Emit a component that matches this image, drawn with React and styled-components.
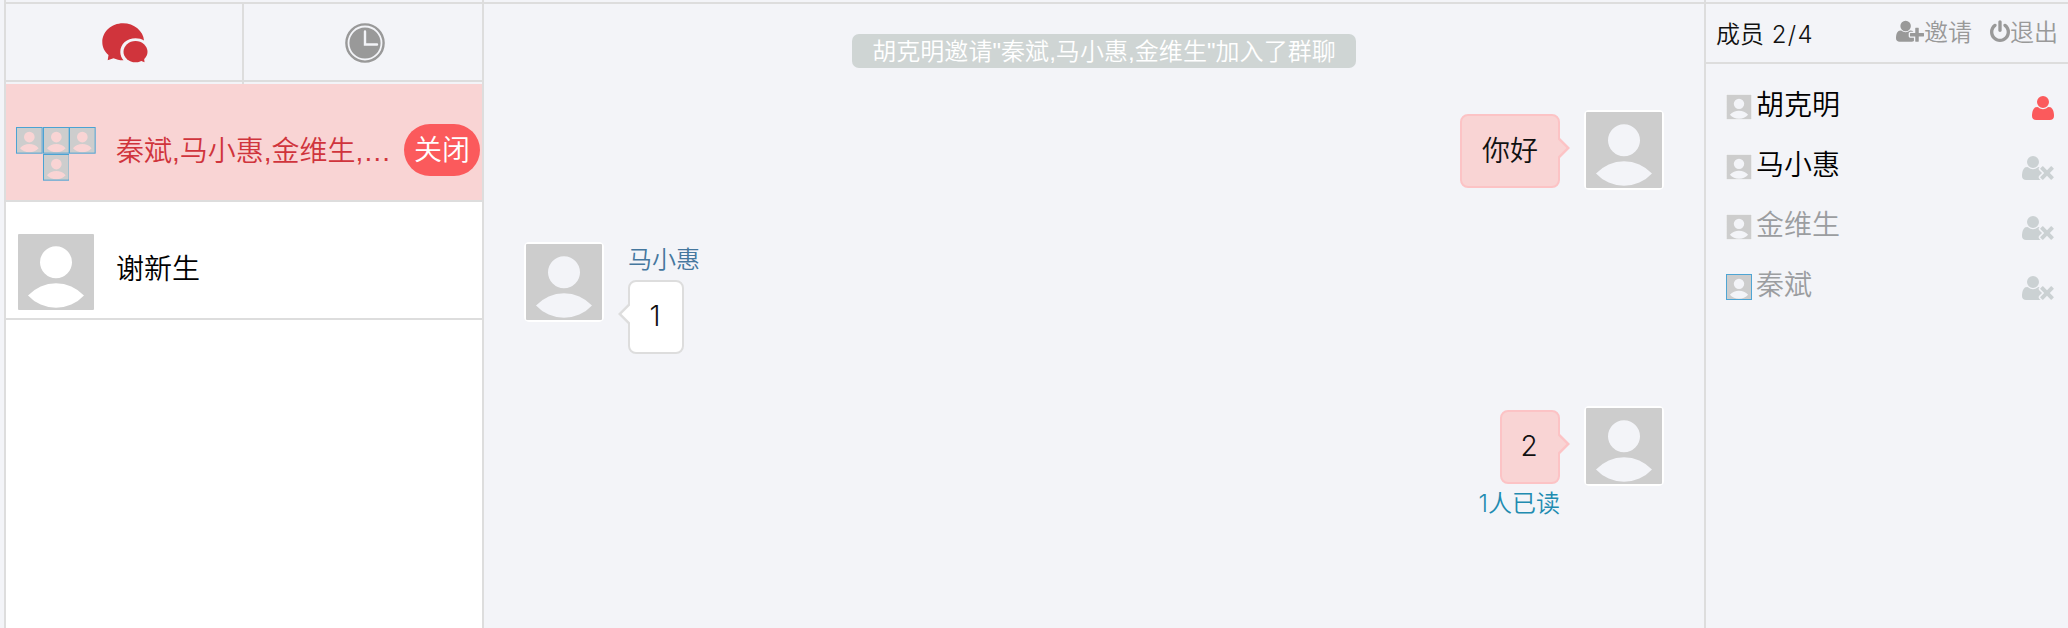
import React from 'react';
import styled, { createGlobalStyle, css } from 'styled-components';

const Global = createGlobalStyle`
  * { box-sizing: border-box; }
  body {
    margin: 0;
    background: #f3f4f8;
    color: #000;
    font-family: "Liberation Sans", "Noto Sans CJK SC", sans-serif;
    font-weight: 350;
  }
  svg { display: block; flex: none; }
`;

const line = '#dddddd';
const numeric = '"Inter", "Noto Sans CJK SC", sans-serif';

const Page = styled.div`
  display: flex;
  height: 628px;
  padding-left: 4px;
  overflow: hidden;
`;

const Sidebar = styled.aside`
  display: flex;
  flex-direction: column;
  width: 480px;
  padding-top: 2px;
  border-left: 2px solid ${line};
  border-right: 2px solid ${line};
`;

const Tabs = styled.nav`
  display: flex;
  height: 80px;
  border-top: 2px solid ${line};
  border-bottom: 2px solid ${line};
`;

const Tab = styled.button`
  display: flex;
  justify-content: center;
  align-items: flex-start;
  flex: none;
  width: 238px;
  height: 80px;
  padding: 19px 0 0 ${(p) => (p.$first ? 2 : 4)}px;
  border: 0;
  border-right: ${(p) => (p.$first ? `2px solid ${line}` : 0)};
  background: none;
`;

const Chats = styled.div`
  flex: 1;
  margin-top: 2px;
  background: #fff;
`;

const ChatRow = styled.div`
  display: flex;
  height: 118px;
  padding: 30px 2px 0 10px;
  border-bottom: 2px solid ${line};
  background: ${(p) => (p.$active ? '#f9d4d4' : '#fff')};
  color: ${(p) => (p.$active ? '#d0343c' : '#000')};
`;

const ChatTitle = styled.div`
  flex: 1;
  min-width: 0;
  margin: 0 12px 0 20px;
  font-size: 28px;
  line-height: 75px;
  white-space: nowrap;
`;

const CloseButton = styled.button`
  width: 76px;
  height: 52px;
  margin-top: 10px;
  padding: 2px 0 0;
  border: 0;
  border-radius: 26px;
  background: #fb5a5c;
  color: #fff;
  font: inherit;
  font-size: 28px;
  line-height: 50px;
`;

const AvatarGroup = styled.div`
  display: flex;
  flex-wrap: wrap;
  justify-content: center;
  align-content: center;
  width: 80px;
  height: 80px;
`;

const Conversation = styled.main`
  display: flex;
  flex-direction: column;
  width: 1220px;
  margin-top: 2px;
  padding: 30px 40px 0;
  border-top: 2px solid ${line};
`;

const Notice = styled.div`
  align-self: center;
  height: 34px;
  margin-left: 20px;
  padding: 0 20px;
  border-radius: 7px;
  background: #cfd5d4;
  color: #fff;
  font-size: 24px;
  letter-spacing: 0.06px;
  line-height: 36px;
  white-space: nowrap;
`;

const Message = styled.div`
  display: flex;
  flex-direction: ${(p) => (p.$own ? 'row-reverse' : 'row')};
  align-items: flex-start;
  gap: 24px;
  height: ${(p) => p.$height}px;
`;

const MessageBody = styled.div`
  display: flex;
  flex-direction: column;
  align-items: ${(p) => (p.$own ? 'flex-end' : 'flex-start')};
  padding-top: ${(p) => (p.$own ? 4 : 0)}px;
`;

const Sender = styled.div`
  height: 38px;
  color: #45779e;
  font-size: 24px;
  line-height: 36px;
`;

const Bubble = styled.div`
  position: relative;
  height: 74px;
  min-width: ${(p) => (p.$own ? 60 : 56)}px;
  padding: 0 20px;
  border: 2px solid ${(p) => (p.$own ? '#fcc3c5' : line)};
  border-radius: 8px;
  background: ${(p) => (p.$own ? '#f9d4d4' : '#fff')};
  color: #111;
  font-family: ${numeric};
  font-size: 28px;
  line-height: 70px;
  text-align: center;
`;

const Digit = styled.span`
  display: block;
  margin: 0 -3px 0 -5px;
  line-height: 69px;
`;

const Pointer = styled.svg`
  position: absolute;
  top: 20px;
  ${(p) => (p.$own ? css`right: -12px;` : css`left: -12px; transform: scaleX(-1);`)}
`;

const ReadCount = styled.div`
  color: #218bb0;
  font-family: ${numeric};
  font-size: 24px;
  line-height: 36px;
  margin-top: 2px;
`;

const Members = styled.aside`
  flex: 1;
  padding-top: 2px;
  border-left: 2px solid ${line};
`;

const MembersHeader = styled.header`
  display: flex;
  height: 62px;
  padding: 0 10px;
  border-top: 2px solid ${line};
  border-bottom: 2px solid ${line};
  color: #111;
  font-family: ${numeric};
  font-size: 24px;
  line-height: 62px;
  white-space: nowrap;
`;

const MembersCount = styled.div`
  flex: 1;
`;

const Tally = styled.span`
  margin-left: 1px;
  letter-spacing: 1.3px;
`;

const Action = styled.button`
  display: flex;
  align-items: center;
  margin-left: 18px;
  padding: 0;
  border: 0;
  background: none;
  color: #999;
  font: inherit;
  svg { margin-bottom: 3px; }
`;

const MemberList = styled.div`
  padding: 10px 14px 0 20px;
`;

const Member = styled.div`
  display: flex;
  align-items: center;
  height: 60px;
  color: ${(p) => (p.$offline ? '#9b9da0' : '#000')};
  font-size: 28px;
  line-height: 56px;
  svg { margin-top: 6px; }
  svg:last-child { margin-top: 8px; }
`;

const MemberName = styled.div`
  flex: 1;
  margin-left: 4px;
  padding-top: 3px;
`;

function Avatar({ size = 80, framed, outlined }) {
  return (
    <svg width={size} height={size} viewBox="0 0 80 80">
      {framed && <rect x="1" y="1" width="78" height="78" rx="4" fill="none" stroke="#fff" strokeWidth="2" />}
      <path
        fill="#cdcdcd"
        fillRule="evenodd"
        d="M3 2H77Q78 2 78 3V77Q78 78 77 78H3Q2 78 2 77V3Q2 2 3 2ZM40 14.3A16 16 0 0 0 40 46.3A16 16 0 0 0 40 14.3ZM12 63.5A38 38 0 0 1 68 63.5A38 38 0 0 1 12 63.5Z"
      />
      {outlined && <rect x="1.5" y="1.5" width="77" height="77" fill="none" stroke="#4ba3d3" strokeWidth="3" />}
    </svg>
  );
}

const personHead = 'M704 896q-159 0-271.5-112.5t-112.5-271.5 112.5-271.5 271.5-112.5 271.5 112.5 112.5 271.5-112.5 271.5-271.5 112.5z';

const UserIcon = () => (
  <svg width="22" height="28" viewBox="192 0 1408 1792" fill="#fb5a5c">
    <path d="M1600 1405q0 120-73 189.5t-194 69.5h-874q-121 0-194-69.5t-73-189.5q0-53 3.5-103.5t14-109 26.5-108.5 43-97.5 62-81 85.5-53.5 111.5-20q9 0 42 21.5t74.5 48 108 48 133.5 21.5 133.5-21.5 108-48 74.5-48 42-21.5q61 0 111.5 20t85.5 53.5 62 81 43 97.5 26.5 108.5 14 109 3.5 103.5zm-320-893q0 159-112.5 271.5t-271.5 112.5-271.5-112.5-112.5-271.5 112.5-271.5 271.5-112.5 271.5 112.5 112.5 271.5z" />
  </svg>
);

const UserTimesIcon = () => (
  <svg width="32" height="28" viewBox="0 0 2048 1792" fill="#cbd1d3">
    <path d={`${personHead}m1077 320l249 249q9 9 9 23 0 13-9 22l-136 136q-9 9-22 9-14 0-23-9l-249-249-249 249q-9 9-23 9-13 0-22-9l-136-136q-9-9-9-22 0-14 9-23l249-249-249-249q-9-9-9-23 0-13 9-22l136-136q9-9 22-9 14 0 23 9l249 249 249-249q9-9 23-9 13 0 22 9l136 136q9 9 9 22 0 14-9 23zm-498 0l-181 181q-37 37-37 91 0 53 37 90l83 83q-21 3-44 3h-874q-121 0-194-69t-73-190q0-53 3.5-103.5t14-109 26.5-108.5 43-97.5 62-81 85.5-53.5 111.5-20q19 0 39 17 154 122 319 122t319-122q20-17 39-17 28 0 57 6-28 27-41 50t-13 56q0 54 37 91z`} />
  </svg>
);

const UserPlusIcon = () => (
  <svg width="28" height="24.5" viewBox="0 0 2048 1792" fill="currentColor">
    <path d={`${personHead}m960 128h352q13 0 22.5 9.5t9.5 22.5v192q0 13-9.5 22.5t-22.5 9.5h-352v352q0 13-9.5 22.5t-22.5 9.5h-192q-13 0-22.5-9.5t-9.5-22.5v-352h-352q-13 0-22.5-9.5t-9.5-22.5v-192q0-13 9.5-22.5t22.5-9.5h352v-352q0-13 9.5-22.5t22.5-9.5h192q13 0 22.5 9.5t9.5 22.5v352zm-736 224q0 52 38 90t90 38h256v238q-68 50-171 50h-874q-121 0-194-69t-73-190q0-53 3.5-103.5t14-109 26.5-108.5 43-97.5 62-81 85.5-53.5 111.5-20q19 0 39 17 79 61 154.5 91.5t164.5 30.5 164.5-30.5 154.5-91.5q20-17 39-17 132 0 217 96h-223q-52 0-90 38t-38 90v192z`} />
  </svg>
);

const PowerIcon = () => (
  <svg width="20" height="24" viewBox="128 0 1536 1792" fill="currentColor">
    <path d="M1664 896q0 156-61 298t-164 245-245 164-298 61-298-61-245-164-164-245-61-298q0-182 80.5-343t226.5-270q43-32 95.5-25t83.5 50q32 42 24.5 94.5t-49.5 84.5q-98 74-151.5 181t-53.5 228q0 104 40.5 198.5t109.5 163.5 163.5 109.5 198.5 40.5 198.5-40.5 163.5-109.5 109.5-163.5 40.5-198.5q0-121-53.5-228t-151.5-181q-42-32-49.5-84.5t24.5-94.5q31-43 84-50t95 25q146 109 226.5 270t80.5 343zm-640-768v640q0 52-38 90t-90 38-90-38-38-90v-640q0-52 38-90t90-38 90 38 38 90z" />
  </svg>
);

const ChatIcon = () => (
  <svg width="46" height="40" viewBox="0 0 46 40" fill="#d0343c">
    <path d="M42 17.5C41.5 8 32 .2 21 .2C9.5 .2 .3 8.5 .3 19C.3 24.5 2.5 28.5 6.5 32L5.7 37.2L11.5 35.2C14.5 36.6 18 37.3 21.5 37.2C19.5 35 18.3 32 18.3 29C18.3 21 25 15.3 33.5 15.3C37 15.3 39.5 16 42 17.5Z" />
    <ellipse cx="33.5" cy="28.7" rx="12" ry="10.6" />
    <path d="M38 37.5L42.5 39.2L42 34.5Z" />
  </svg>
);

const ClockIcon = () => (
  <svg width="40" height="40" viewBox="0 0 40 40" fill="none">
    <circle cx="20" cy="20" r="18.6" stroke="#999" strokeWidth="2.4" />
    <circle cx="20" cy="20" r="15.6" fill="#999" />
    <path d="M20 8.5V21.5H32" stroke="#f3f4f8" strokeWidth="2.4" strokeLinecap="round" />
  </svg>
);

function BubblePointer({ own }) {
  return (
    <Pointer $own={own} width="12" height="24" viewBox="0 0 12 24">
      <path d="M0 0L12 12L0 24Z" fill={own ? '#fcc3c5' : line} />
      <path d="M0 3.500L8.500 12L0 20.500Z" fill={own ? '#f9d4d4' : '#fff'} />
    </Pointer>
  );
}

function ChatMessage({ own, height, sender, text, read }) {
  return (
    <Message $own={own} $height={height}>
      <Avatar framed />
      <MessageBody $own={own}>
        {sender && <Sender>{sender}</Sender>}
        <Bubble $own={own}>
          {text.length === 1 ? <Digit>{text}</Digit> : text}
          <BubblePointer own={own} />
        </Bubble>
        {read && <ReadCount>{read}</ReadCount>}
      </MessageBody>
    </Message>
  );
}

const Thread = styled.div`
  margin-top: 42px;
`;

const members = [
  { name: '胡克明', owner: true },
  { name: '马小惠' },
  { name: '金维生', offline: true },
  { name: '秦斌', offline: true, outlined: true },
];

export default function App() {
  return (
    <Page>
      <Global />
      <Sidebar>
        <Tabs>
          <Tab $first><ChatIcon /></Tab>
          <Tab><ClockIcon /></Tab>
        </Tabs>
        <Chats>
          <ChatRow $active>
            <AvatarGroup>
              {[0, 1, 2, 3].map((i) => <Avatar key={i} size={26.66} outlined />)}
            </AvatarGroup>
            <ChatTitle>秦斌,马小惠,金维生,…</ChatTitle>
            <CloseButton>关闭</CloseButton>
          </ChatRow>
          <ChatRow>
            <Avatar />
            <ChatTitle>谢新生</ChatTitle>
          </ChatRow>
        </Chats>
      </Sidebar>
      <Conversation>
        <Notice>胡克明邀请"秦斌,马小惠,金维生"加入了群聊</Notice>
        <Thread>
          <ChatMessage own height={132} text="你好" />
          <ChatMessage height={164} sender="马小惠" text="1" />
          <ChatMessage own height={120} text="2" read="1人已读" />
        </Thread>
      </Conversation>
      <Members>
        <MembersHeader>
          <MembersCount>成员 <Tally>2/4</Tally></MembersCount>
          <Action><UserPlusIcon />邀请</Action>
          <Action><PowerIcon />退出</Action>
        </MembersHeader>
        <MemberList>
          {members.map((m) => (
            <Member key={m.name} $offline={m.offline}>
              <Avatar size={26} framed={!m.outlined} outlined={m.outlined} />
              <MemberName>{m.name}</MemberName>
              {m.owner ? <UserIcon /> : <UserTimesIcon />}
            </Member>
          ))}
        </MemberList>
      </Members>
    </Page>
  );
}
